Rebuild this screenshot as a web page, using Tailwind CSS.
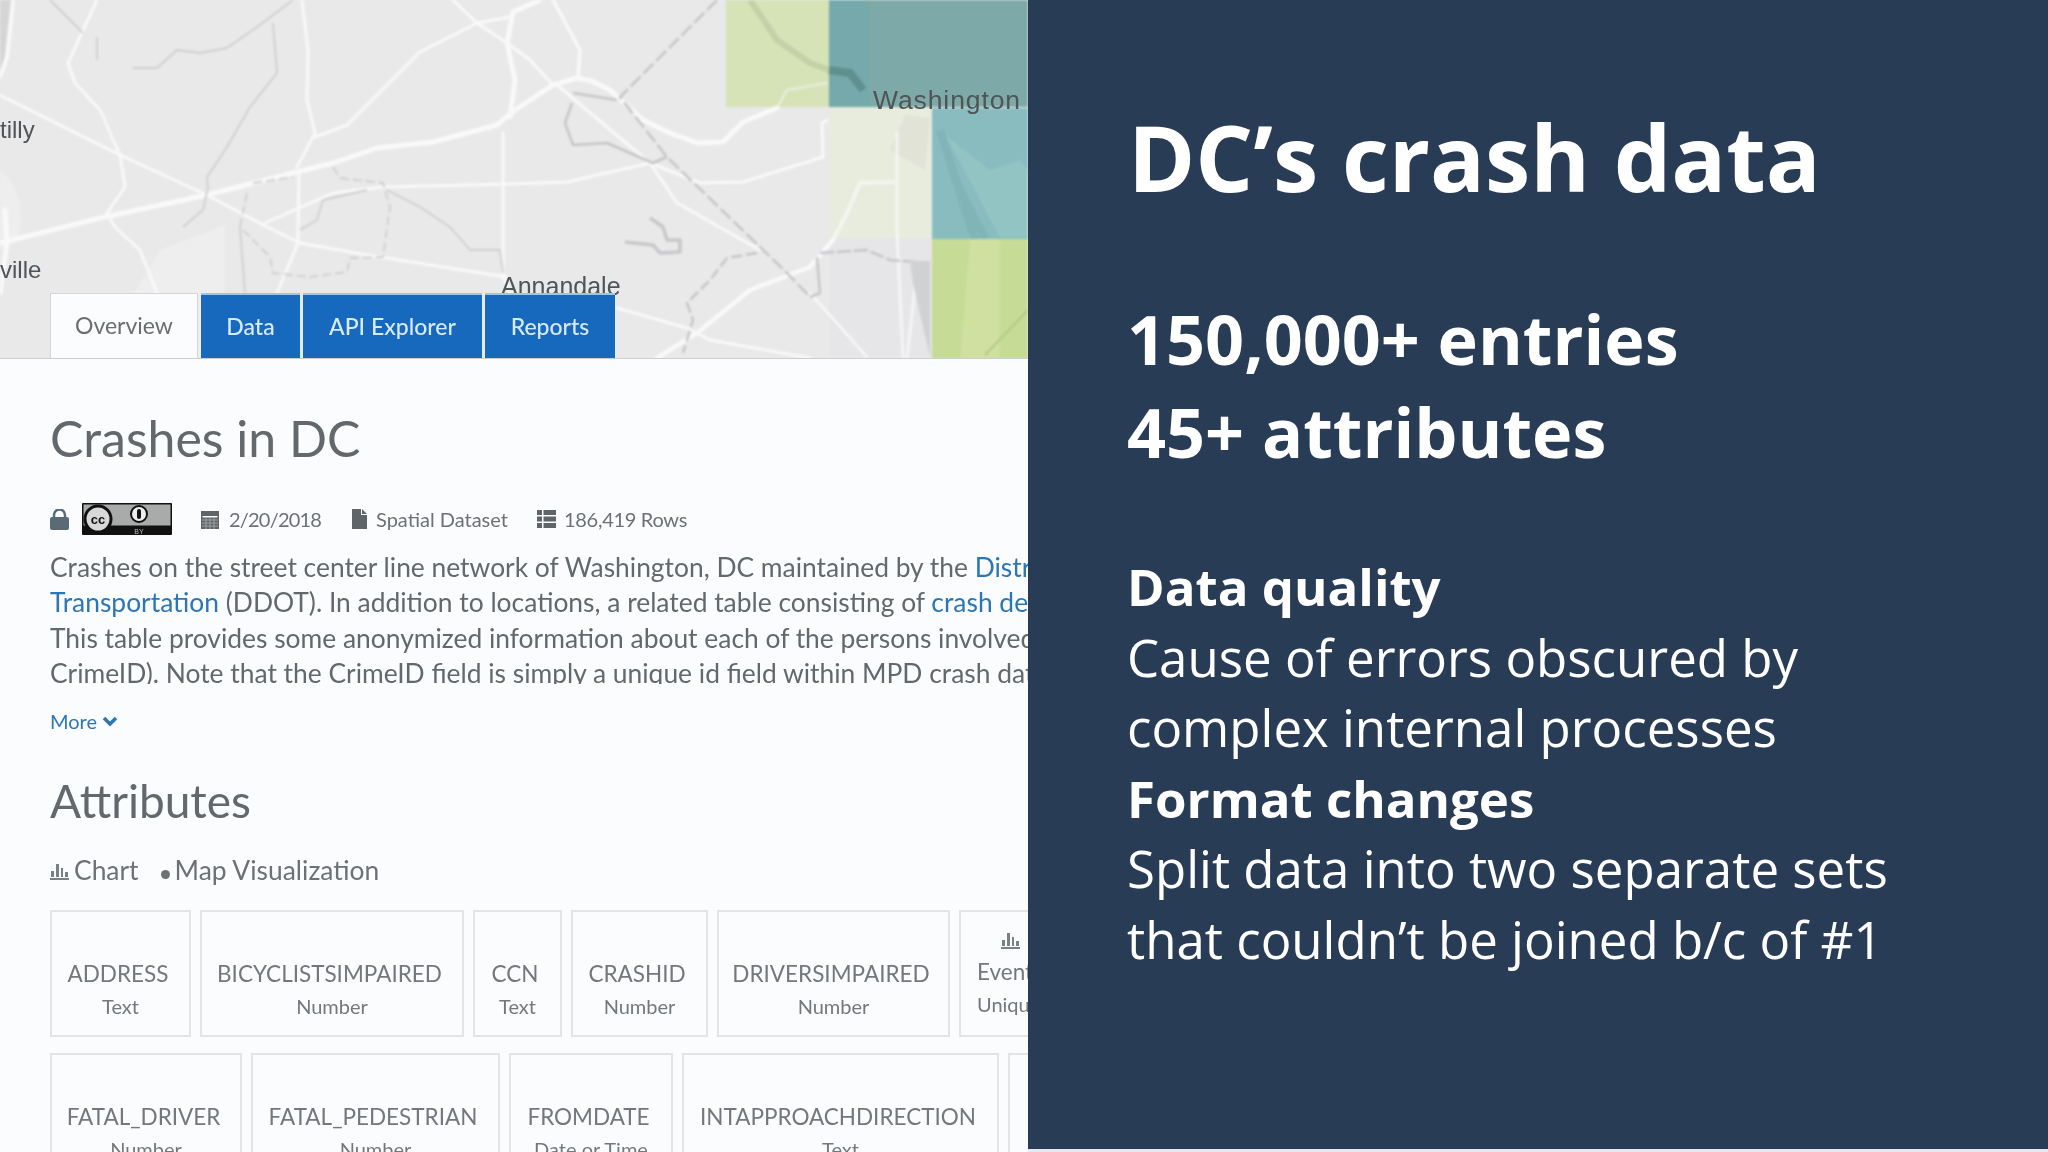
<!DOCTYPE html>
<html><head><meta charset="utf-8">
<script src="https://cdn.jsdelivr.net/npm/@tailwindcss/browser@4"></script>
<title>DC's crash data</title></head>
<body class="m-0 overflow-hidden">
<div class="flex w-[2048px] h-[1152px] overflow-hidden bg-[#fbfcfd]">
  <!-- Left: screenshot of open data page -->
  <div class="w-[1028px] h-[1152px] shrink-0 overflow-hidden font-['Lato',sans-serif] text-[#63686c]">
    <div class="relative h-[359px] bg-[#e9e9ea] overflow-hidden border-b border-[#cdcecf]">
      <svg class="absolute inset-0 blur-[1px]" width="1028" height="359" viewBox="0 0 1028 359">
        <rect x="0" y="0" width="1028" height="359" fill="#e9e9ea"/>
        <path d="M0 170 Q28 190 18 240 L0 250Z" fill="#eeeeef"/>
        <path d="M130 300 L160 250 L225 225 L225 290 L200 358 H150Z" fill="#eeeeef"/>
        <path d="M0 0 H12 L8 50 L0 75Z" fill="#d5d5d6"/>
        <rect x="726" y="0" width="103" height="107" fill="#d5e3b6"/>
        <rect x="829" y="0" width="199" height="107" fill="#7daaa8"/>
        <rect x="829" y="0" width="40" height="107" fill="#75a9ab"/>
        <rect x="829" y="107" width="103" height="131" fill="#e8ecdd"/>
        <rect x="829" y="238" width="103" height="120" fill="#e6e6e8"/>
        <rect x="932" y="108" width="96" height="131" fill="#88bcbf"/>
        <path d="M945 135 L990 170 L1020 160 L1028 170 V238 H1000 L975 190 Z" fill="#92c4c4"/>
        <path d="M940 130 L975 240 M955 180 L985 238" fill="none" stroke="#80b4b7" stroke-width="8"/>
        <rect x="932" y="239" width="96" height="120" fill="#c6db96"/>
        <path d="M970 239 L960 358 H1000 L1000 239Z" fill="#cfe0a0"/>
        <path d="M985 355 L1028 310" fill="none" stroke="#b2c98a" stroke-width="2"/>
        <path d="M750 0 L777 40 L810 63 L829 70" fill="none" stroke="#c3d1a8" stroke-width="6"/>
        <path d="M829 70 L850 73 L863 90" fill="none" stroke="#5e908f" stroke-width="8"/>
        <path d="M905 115 L930 118 L925 170 L890 150Z" fill="#e0e3d6"/>
        <g fill="none" stroke="#f9f9fa" stroke-linecap="round" stroke-linejoin="round">
          <path stroke-width="5" d="M0 243 L100 218 L207 195 L293 173 L333 163 L377 148 L433 142 L497 125 L515 110 L553 85 L577 78 L592 81 L610 90 L643 120 L670 133 L697 143 L723 142 L743 122 L777 108"/>
          <path stroke-width="3" d="M0 95 L120 155 L207 195 L267 227 L300 243 L367 255 L507 277"/>
          <path stroke-width="3" d="M97 0 L68 63 L75 83 L100 110 L120 155 L125 187 L107 213 L115 227 L140 250 L157 293"/>
          <path stroke-width="3" d="M302 0 L308 50 L307 100 L315 133 L297 167"/>
          <path stroke-width="3" d="M315 137 L347 125 L420 52 L477 23 L510 17"/>
          <path stroke-width="3" d="M503 133 L503 277 L510 293"/>
          <path stroke-width="5" d="M540 0 L513 12 L507 43 L515 80 L510 117"/>
          <path stroke-width="3" d="M265 223 L333 193 L383 187 L510 184 L567 182 L650 163 L700 183 L743 182 L823 157 L822 123 L827 120"/>
          <path stroke-width="3" d="M299 173 L298 243 L277 293"/>
          <path stroke-width="3" d="M453 0 L477 23 L507 43 L530 60 L553 85"/>
          <path stroke-width="3.500" d="M553 0 L580 50 L578 78"/>
          <path stroke-width="3" d="M557 85 L650 163 L677 203 L760 250"/>
          <path stroke-width="2.500" d="M810 293 L867 357"/>
          <path stroke-width="4.500" d="M657 358 L697 333 L750 290 L810 267 L833 240"/>
          <path stroke-width="3" d="M617 308 L687 328 L710 340 L810 358"/>
          <path stroke-width="4" d="M13 0 L7 57 L0 77"/>
          <path stroke-width="5" d="M5 210 L7 243 L0 293"/>
          <path stroke-width="4" stroke-opacity=".7" d="M833 240 L847 213 L860 183 L893 182"/>
          <path stroke-width="3" stroke-opacity=".8" d="M897 133 L897 233 L903 358"/>
          <path stroke-width="3" stroke-opacity=".8" d="M915 287 L907 358"/>
          <path stroke-width="3" stroke-opacity=".45" d="M777 108 L787 90 L827 83"/>
        </g>
        <g fill="none" stroke="#cfcfd1" stroke-width="1.800" stroke-linejoin="round">
          <path d="M133 68 L157 68 L177 50 L200 53 L227 48 L257 27 L293 0"/>
          <path d="M273 23 L277 73 L250 107 L227 147 L207 177 L208 187 L203 210 L183 227"/>
          <path d="M50 0 L83 33 M97 37 L97 60"/>
          <path stroke-dasharray="9 4" d="M253 183 L293 177 M333 167 L340 178 L383 183 L390 207 L383 257 L350 258 L347 272 L310 277 L273 273 L270 257 L240 227 L247 193"/>
          <path d="M387 190 L420 207 L450 227 L470 250 L500 250 L503 273"/>
          <path d="M367 190 L323 200 L317 220 L300 230 M240 227 L245 293"/>
          <path stroke="#c6c6c8" stroke-width="2.500" stroke-dasharray="14 4" d="M717 0 L620 97 L667 157 L787 273 L810 297"/>
          <path stroke="#c6c6c8" stroke-width="2.500" d="M573 93 L617 100 M572 103 L565 123 L573 145 L607 143 L653 163 L667 157"/>
          <path stroke="#c8c8ca" stroke-width="3.500" d="M650 218 L663 227 L667 240 L680 240 L680 252 L660 253 L653 245 L625 242"/>
          <path stroke="#c6c6c8" stroke-width="2.500" stroke-dasharray="11 4" d="M757 253 L727 258 L710 280 L687 303 L693 320 L683 353"/>
          <path stroke="#c6c6c8" stroke-width="2.500" d="M817 257 L820 293 L810 297"/>
          <path stroke="#c6c6c8" stroke-width="2.500" stroke-dasharray="14 3" d="M820 253 L867 250 L890 260 L930 263"/>
        </g>
        <path d="M910 260 L930 263 L930 357 L913 283Z" fill="#d0d1d3"/>
      </svg>
      <span class="absolute left-[873px] top-[85px] text-[26.500px] leading-[30px] text-[#4f5456] font-['Liberation_Sans',sans-serif] tracking-[0.9px] blur-[0.6px]">Washington</span>
      <span class="absolute left-0 top-[115px] text-[24px] leading-[30px] text-[#4f5456] font-['Liberation_Sans',sans-serif] blur-[0.6px]">tilly</span>
      <span class="absolute left-0 top-[255px] text-[24px] leading-[30px] text-[#4f5456] font-['Liberation_Sans',sans-serif] blur-[0.6px]">ville</span>
      <span class="absolute left-[501px] top-[271px] text-[25px] leading-[30px] text-[#4f5456] font-['Liberation_Sans',sans-serif] blur-[0.6px]">Annandale</span>
      <div class="absolute left-[50px] bottom-0 flex h-[65px] gap-[3px] text-[23px] blur-[0.5px]">
        <div class="w-[148px] pb-[1px] flex items-center justify-center bg-[#fbfcfd] border border-b-0 border-[#d4d5d6] text-[#6a6e71]">Overview</div>
        <div class="w-[99px] pb-[1px] flex items-center justify-center bg-[#1769bd] border-t-2 border-[#8ecbef] text-[#d7eafa] font-medium">Data</div>
        <div class="w-[179px] pb-[1px] flex items-center justify-center bg-[#1769bd] border-t-2 border-[#8ecbef] text-[#d7eafa] font-medium">API Explorer</div>
        <div class="w-[130px] pb-[1px] flex items-center justify-center bg-[#1769bd] border-t-2 border-[#8ecbef] text-[#d7eafa] font-medium">Reports</div>
      </div>
    </div>
    <div class="pl-[50px] pt-[49px] blur-[0.6px]">
      <h2 class="text-[50px] leading-[60px] whitespace-nowrap">Crashes in DC</h2>
      <div class="mt-[34px] h-[34px] flex items-center text-[20px] whitespace-nowrap text-[#6d7175]">
        <svg class="mr-[13px]" width="19" height="21" viewBox="0 0 19 21"><path d="M4 9V6a5.500 5.500 0 0 1 11 0v3" fill="none" stroke="#5a6b78" stroke-width="2.500"/><rect x="0" y="8" width="19" height="13" rx="2" fill="#5a6b78"/></svg>
        <svg width="90" height="32" viewBox="0 0 90 32"><rect width="90" height="32" rx="1" fill="#111"/><rect x="1.500" y="1.500" width="87" height="21" fill="#a9abab"/><circle cx="16" cy="16" r="13" fill="#d8d8d8" stroke="#111" stroke-width="3"/><text x="16" y="21" text-anchor="middle" font-size="13" font-weight="700" fill="#111" font-family="Liberation Sans">cc</text><circle cx="57" cy="11" r="8" fill="#eee" stroke="#111" stroke-width="2"/><rect x="55" y="6" width="4" height="10" rx="2" fill="#111"/><text x="57" y="31" text-anchor="middle" font-size="7" fill="#bbb" font-family="Liberation Sans">BY</text></svg>
        <svg class="ml-[29px]" width="18" height="20" viewBox="0 0 18 20"><rect y="2" width="18" height="18" fill="#5f6468"/><rect x="1.500" y="7" width="15" height="1.500" fill="#fbfcfd"/><path d="M1 11H17M1 14H17M1 17H17M5 8V20M9 8V20M13 8V20" stroke="#9ea2a5" stroke-width="1"/></svg>
        <span class="ml-[10px] w-[123px] tracking-[-0.8px]">2/20/2018</span>
        <svg width="15" height="20" viewBox="0 0 15 20"><path d="M0 0H9V6H15V20H0ZM10 0L15 5H10Z" fill="#5f6468"/></svg>
        <span class="ml-[9px] w-[161px]">Spatial Dataset</span>
        <svg width="19" height="18" viewBox="0 0 19 18"><path d="M0 0H5V5H0ZM6.500 0H19V5H6.500ZM0 6.500H5V11.500H0ZM6.500 6.500H19V11.500H6.500ZM0 13H5V18H0ZM6.500 13H19V18H6.500Z" fill="#5f6468"/></svg>
        <span class="ml-[8px] tracking-[-0.3px]">186,419 Rows</span>
      </div>
      <div class="mt-[14px] h-[134px] overflow-hidden text-[26.400px] leading-[35.300px] whitespace-nowrap text-[#63686c]">
        <p>Crashes on the street center line network of Washington, DC maintained by the <span class="text-[#2b76b5]">District Department of</span></p>
        <p><span class="text-[#2b76b5]">Transportation</span> (DDOT). In addition to locations, a related table consisting of <span class="text-[#2b76b5]">crash details</span></p>
        <p>This table provides some anonymized information about each of the persons involved</p>
        <p>CrimeID). Note that the CrimeID field is simply a unique id field within MPD crash data</p>
      </div>
      <div class="mt-[22px] flex items-center gap-[5px] text-[20px] leading-[30px] text-[#2b76b5]">More
        <svg width="16" height="11" viewBox="0 0 16 11"><path d="M2 2L8 8L14 2" fill="none" stroke="#2b76b5" stroke-width="3.500"/></svg>
      </div>
      <h2 class="mt-[37px] text-[46px] leading-[56px]">Attributes</h2>
      <div class="mt-[25px] h-[34px] flex items-center text-[26.400px] text-[#6d7175]">
        <svg class="mr-[5px]" width="19" height="18" viewBox="0 0 19 18"><path d="M0 16H19V18H0ZM1 9H4V15H1ZM6 2H9V15H6ZM11 6H13V15H11ZM15 10H18V15H15Z" fill="#7b8083"/></svg>
        <span>Chart</span>
        <span class="ml-[22px] mr-[5px] inline-block w-[9px] h-[9px] mt-[7px] rounded-full bg-[#6d7175]"></span>
        <span>Map Visualization</span>
      </div>
      <div class="mt-[22px] flex gap-[9px] h-[127px] whitespace-nowrap">
        <div class="w-[141px] shrink-0 flex flex-col items-center pt-[47px] border-2 border-[#e3e4e6] text-[22.500px] leading-[30px] text-[#74787c]"><span class="pr-[5px]">ADDRESS</span><span class="mt-[3px] text-[20px] leading-[28px]">Text</span></div>
        <div class="w-[264px] shrink-0 flex flex-col items-center pt-[47px] border-2 border-[#e3e4e6] text-[22.500px] leading-[30px] text-[#74787c]"><span class="pr-[5px]">BICYCLISTSIMPAIRED</span><span class="mt-[3px] text-[20px] leading-[28px]">Number</span></div>
        <div class="w-[89px] shrink-0 flex flex-col items-center pt-[47px] border-2 border-[#e3e4e6] text-[22.500px] leading-[30px] text-[#74787c]"><span class="pr-[5px]">CCN</span><span class="mt-[3px] text-[20px] leading-[28px]">Text</span></div>
        <div class="w-[137px] shrink-0 flex flex-col items-center pt-[47px] border-2 border-[#e3e4e6] text-[22.500px] leading-[30px] text-[#74787c]"><span class="pr-[5px]">CRASHID</span><span class="mt-[3px] text-[20px] leading-[28px]">Number</span></div>
        <div class="w-[233px] shrink-0 flex flex-col items-center pt-[47px] border-2 border-[#e3e4e6] text-[22.500px] leading-[30px] text-[#74787c]"><span class="pr-[5px]">DRIVERSIMPAIRED</span><span class="mt-[3px] text-[20px] leading-[28px]">Number</span></div>
        <div class="w-[120px] shrink-0 flex flex-col items-start pl-[16px] pt-[19px] border-2 border-[#e3e4e6] text-[22.500px] leading-[30px] text-[#74787c]">
          <svg class="mb-[8px] ml-[24px]" width="19" height="18" viewBox="0 0 19 18"><path d="M0 16H19V18H0ZM1 9H4V15H1ZM6 2H9V15H6ZM11 6H13V15H11ZM15 10H18V15H15Z" fill="#7b8083"/></svg>
          <span>EventID</span><span class="mt-[3px] text-[20px] leading-[28px]">Unique</span></div>
      </div>
      <div class="mt-[16px] flex gap-[9px] h-[126px] whitespace-nowrap">
        <div class="w-[192px] shrink-0 flex flex-col items-center pt-[47px] border-2 border-[#e3e4e6] text-[22.500px] leading-[30px] text-[#74787c]"><span class="pr-[5px]">FATAL_DRIVER</span><span class="mt-[3px] text-[20px] leading-[28px]">Number</span></div>
        <div class="w-[249px] shrink-0 flex flex-col items-center pt-[47px] border-2 border-[#e3e4e6] text-[22.500px] leading-[30px] text-[#74787c]"><span class="pr-[5px]">FATAL_PEDESTRIAN</span><span class="mt-[3px] text-[20px] leading-[28px]">Number</span></div>
        <div class="w-[164px] shrink-0 flex flex-col items-center pt-[47px] border-2 border-[#e3e4e6] text-[22.500px] leading-[30px] text-[#74787c]"><span class="pr-[5px]">FROMDATE</span><span class="mt-[3px] text-[20px] leading-[28px]">Date or Time</span></div>
        <div class="w-[317px] shrink-0 flex flex-col items-center pt-[47px] border-2 border-[#e3e4e6] text-[22.500px] leading-[30px] text-[#74787c]"><span class="pr-[5px]">INTAPPROACHDIRECTION</span><span class="mt-[3px] text-[20px] leading-[28px]">Text</span></div>
        <div class="w-[120px] shrink-0 border-2 border-[#e3e4e6]"></div>
      </div>
    </div>
  </div>
  <!-- Right: dark slide panel -->
  <div class="w-[1020px] h-[1152px] shrink-0 flex flex-col">
    <div class="h-[1149px] bg-[#293c56] pl-[99px] font-['Open_Sans',sans-serif] text-white">
      <h1 class="mt-[97px] pl-[1px] text-[91px] leading-[120px] font-bold whitespace-nowrap">DC’s crash data</h1>
      <p class="mt-[75px] text-[68.300px] leading-[93px] font-bold whitespace-nowrap">150,000+ entries<br>45+ attributes</p>
      <div class="mt-[73px] text-[51px] leading-[70.500px] whitespace-nowrap">
        <p class="font-bold">Data quality</p>
        <p>Cause of errors obscured by</p>
        <p>complex internal processes</p>
        <p class="font-bold">Format changes</p>
        <p>Split data into two separate sets</p>
        <p>that couldn’t be joined b/c of #1</p>
      </div>
    </div>
    <div class="h-[3px] bg-[#e6e8ee]"></div>
  </div>
</div>
</body></html>
